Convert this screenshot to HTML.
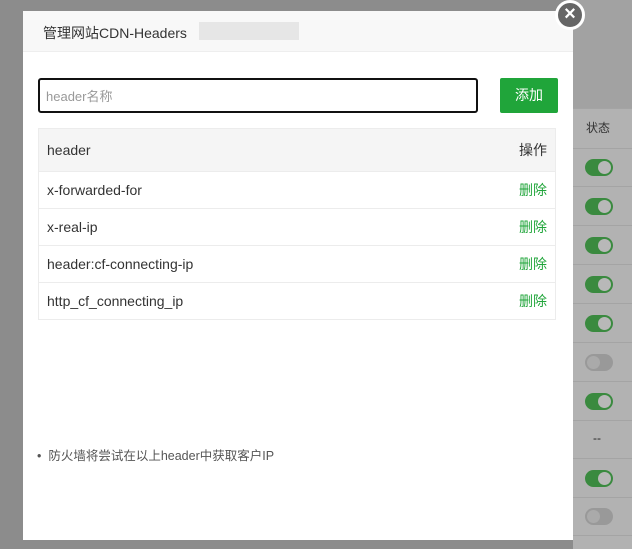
<!DOCTYPE html>
<html><head><meta charset="utf-8"><style>
*{box-sizing:border-box;margin:0;padding:0}
body{width:632px;height:549px;overflow:hidden;position:relative;font-family:"Liberation Sans","Noto Sans CJK SC",sans-serif;background:#8c8c8c}
.right{position:absolute;left:573px;top:0;width:59px;height:549px;background:#b2b2b2}
.row{position:absolute;left:573px;width:59px;border-top:1px solid #a4a4a4}
.tg{position:absolute;left:585px;width:28px;height:17px;border-radius:9px;background:#3a8a3f}
.tg::after{content:"";position:absolute;right:2px;top:2px;width:13px;height:13px;border-radius:50%;background:#b8b8b8}
.tg.off{background:#999}
.tg.off::after{left:2px;right:auto;background:#aaa}
.modal{position:absolute;left:23px;top:11px;width:550px;height:529px;background:#fff}
.title{height:41px;background:#f8f8f8;border-bottom:1px solid #eee;font-size:14px;color:#333;padding:12px 0 0 20px}
.blur{position:absolute;left:176px;top:11px;width:100px;height:18px;background:#e6e6e6}
input{position:absolute;left:15px;top:67px;width:440px;height:35px;border:2px solid #111;border-radius:3px;font-size:13px;padding-left:6px;color:#999;font-family:inherit}
.btn{position:absolute;left:477px;top:67px;width:58px;height:35px;background:#20a53a;color:#fff;font-size:14px;text-align:center;line-height:35px;border-radius:2px}
table{position:absolute;left:15px;top:117px;width:518px;border-collapse:collapse;font-size:14px;color:#333;border:1px solid #ececec}
td{border-top:1px solid #ececec;height:37px;padding:0 8px}
tr:first-child td{background:#f5f5f5;height:43px}
td:last-child{text-align:right;color:#20a53a}
tr:first-child td:last-child{color:#333}
.tip{position:absolute;left:14px;top:434px;font-size:12.5px;color:#555}
.close{position:absolute;left:555px;top:0;width:30px;height:30px;border-radius:50%;background:#666;border:3px solid #fff;color:#fff;font-size:20px;text-align:center;line-height:22px;font-weight:bold}
</style></head><body>
<div class="right"></div>
<div style="position:absolute;left:573px;top:0;width:59px;height:108px;background:#a2a2a2"></div>
<div class="row" style="top:108px"></div>
<div class="row" style="top:148px"></div>
<div class="row" style="top:186px"></div>
<div class="row" style="top:225px"></div>
<div class="row" style="top:264px"></div>
<div class="row" style="top:303px"></div>
<div class="row" style="top:342px"></div>
<div class="row" style="top:381px"></div>
<div class="row" style="top:420px"></div>
<div class="row" style="top:458px"></div>
<div class="row" style="top:497px"></div>
<div class="row" style="top:535px"></div>
<div style="position:absolute;left:586px;top:119px;font-size:12px;color:#333">状态</div>
<div class="tg" style="top:159px"></div>
<div class="tg" style="top:198px"></div>
<div class="tg" style="top:237px"></div>
<div class="tg" style="top:276px"></div>
<div class="tg" style="top:315px"></div>
<div class="tg off" style="top:354px"></div>
<div class="tg" style="top:393px"></div>
<div style="position:absolute;left:593px;top:431px;font-size:12px;color:#222">--</div>
<div class="tg" style="top:470px"></div>
<div class="tg off" style="top:508px"></div>
<div class="modal">
<div class="title">管理网站CDN-Headers</div>
<div class="blur"></div>
<input value="header名称">
<div class="btn">添加</div>
<table>
<tr><td>header</td><td>操作</td></tr>
<tr><td>x-forwarded-for</td><td>删除</td></tr>
<tr><td>x-real-ip</td><td>删除</td></tr>
<tr><td>header:cf-connecting-ip</td><td>删除</td></tr>
<tr><td>http_cf_connecting_ip</td><td>删除</td></tr>
</table>
<div class="tip">•&nbsp;&nbsp;防火墙将尝试在以上header中获取客户IP</div>
</div>
<div class="close">×</div>
</body></html>
